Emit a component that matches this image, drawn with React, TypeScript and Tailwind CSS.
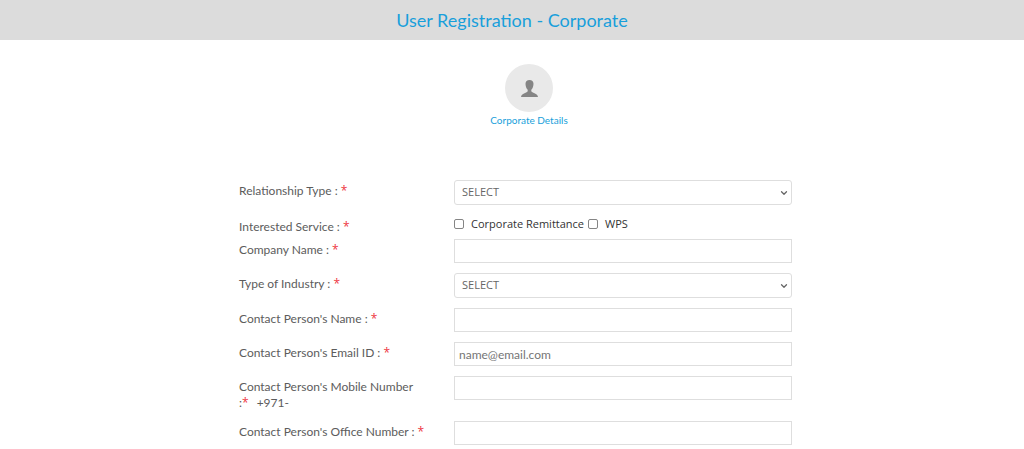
import type { ReactNode } from "react";
import { ChevronDown } from "lucide-react";

const labelClass = "w-[215px] shrink-0 pt-[3px] pr-6 text-xs leading-4 text-[#5c5c5c]";
const inputClass =
  "block h-6 w-full min-w-0 border border-[#dedede] bg-white px-1 text-xs text-[#666] outline-none placeholder:text-[#757575]";

function Star() {
  return <span className="font-['Open_Sans',sans-serif] text-xs leading-none text-[#ee3542]">*</span>;
}

interface RowProps {
  id: string;
  label: ReactNode;
  children: ReactNode;
}

function Row({ id, label, children }: RowProps) {
  return (
    <div className="flex items-start">
      <label htmlFor={id} className={labelClass}>
        {label}
      </label>
      <div className="min-w-0 flex-1">{children}</div>
    </div>
  );
}

function SelectBox({ id }: { id: string }) {
  return (
    <div className="relative">
      <select
        id={id}
        className="block h-[25px] w-full appearance-none rounded-[3px] border border-[#dedede] bg-white px-[7px] font-['Open_Sans',sans-serif] text-[11px] text-[#666] outline-none"
      >
        <option>SELECT</option>
      </select>
      <ChevronDown
        className="pointer-events-none absolute top-2 right-[3px] h-[10px] w-[10px] text-[#666]"
        strokeWidth={3}
      />
    </div>
  );
}

function Check({ label }: { label: string }) {
  return (
    <label className="flex items-center gap-[7px] font-['Open_Sans',sans-serif] text-[11px] leading-4 text-[#333]">
      <input
        type="checkbox"
        className="h-[10px] w-[10px] appearance-none rounded-[2px] border border-[#858585] bg-white checked:bg-[#0f9ad7]"
      />
      {label}
    </label>
  );
}

export default function App() {
  return (
    <div className="bg-white font-['Lato','Open_Sans',sans-serif]">
      <header className="bg-[#dcdcdc]">
        <h1 className="py-2 text-center text-lg leading-6 text-[#189fdb]">
          User Registration - Corporate
        </h1>
      </header>

      <div className="flex flex-col items-center pt-6 pl-[34px]">
        <div className="flex h-12 w-12 items-center justify-center rounded-full bg-[#e9e9e9]">
          <svg viewBox="0 0 17 17" className="h-[17px] w-[17px]" fill="#858585">
            <path d="M8.5 0C6 0 4.500 1.300 4.500 3.800c0 2.600.9 4.800 2.200 5.900v1.600c-.3.9-1.700 1.200-3.200 1.900C1.500 14 .2 15 0 17h17c-.2-2-1.500-3-3.500-3.800-1.500-.7-2.900-1-3.200-1.900V9.700c1.300-1.100 2.200-3.300 2.200-5.900C12.500 1.300 11 0 8.500 0z" />
          </svg>
        </div>
        <p className="text-[10px] leading-4 text-[#189fdb]">Corporate Details</p>
      </div>

      <form className="pt-[52px] pr-[232px] pb-1 pl-[239px]">
        <Row id="relationship" label={<>Relationship Type : <Star /></>}>
          <SelectBox id="relationship" />
        </Row>

        <div role="group" aria-labelledby="service" className="mt-[11px] flex items-start">
          <span id="service" className={labelClass}>
            Interested Service : <Star />
          </span>
          <div className="flex gap-1">
            <Check label="Corporate Remittance" />
            <Check label="WPS" />
          </div>
        </div>

        <div className="mt-1 space-y-[10px]">
          <Row id="company" label={<>Company Name : <Star /></>}>
            <input id="company" type="text" className={inputClass} />
          </Row>
          <Row id="industry" label={<>Type of Industry : <Star /></>}>
            <SelectBox id="industry" />
          </Row>
          <Row id="contact" label={<>Contact Person's Name : <Star /></>}>
            <input id="contact" type="text" className={inputClass} />
          </Row>
          <Row id="email" label={<>Contact Person's Email ID : <Star /></>}>
            <input id="email" type="email" placeholder="name@email.com" className={inputClass} />
          </Row>
          <Row
            id="mobile"
            label={
              <>
                Contact Person's Mobile Number
                <br />:<Star />
                <span className="ml-2">+971-</span>
              </>
            }
          >
            <input id="mobile" type="tel" className={inputClass} />
          </Row>
          <Row id="office" label={<>Contact Person's Office Number : <Star /></>}>
            <input id="office" type="tel" className={inputClass} />
          </Row>
        </div>
      </form>
    </div>
  );
}
